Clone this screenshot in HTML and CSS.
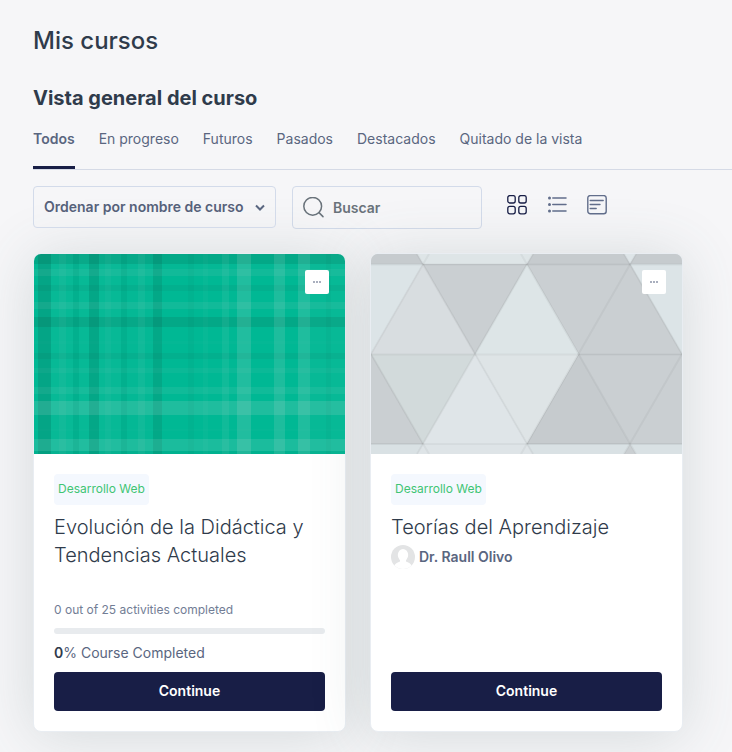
FILE: index.html
```html
<!DOCTYPE html>
<html lang="es">
<head>
<meta charset="utf-8">
<meta name="viewport" content="width=device-width, initial-scale=1">
<title>Mis cursos</title>
<link rel="stylesheet" href="styles.css">
</head>
<body>
<main class="page">
  <h1 class="page-title">Mis cursos</h1>
  <h2 class="section-title">Vista general del curso</h2>

  <nav class="tabs">
    <a class="tab tab-active" href="#todos">Todos</a>
    <a class="tab" href="#progreso">En progreso</a>
    <a class="tab" href="#futuros">Futuros</a>
    <a class="tab" href="#pasados">Pasados</a>
    <a class="tab" href="#destacados">Destacados</a>
    <a class="tab" href="#quitado">Quitado de la vista</a>
  </nav>

  <div class="controls">
    <div class="sort">
      <select class="sort-select" aria-label="Ordenar cursos">
        <option>Ordenar por nombre de curso</option>
      </select>
      <svg class="sort-arrow" width="10" height="8" viewBox="0 0 10 8" fill="none" stroke="currentColor" stroke-width="2"><path d="M1 1.5 5 5.5 9 1.5"/></svg>
    </div>
    <label class="search">
      <svg class="search-icon" width="22" height="22" viewBox="0 0 22 22" fill="none" stroke="currentColor" stroke-width="1.5" stroke-linecap="round"><circle cx="9.7" cy="9.3" r="8.9"/><path d="M16 15.6 20 19.6"/></svg>
      <input class="search-input" type="text" placeholder="Buscar" aria-label="Buscar">
    </label>
    <div class="views">
      <button class="view view-active" type="button" aria-label="Tarjeta">
        <svg width="20" height="20" viewBox="0 0 20 20" fill="none" stroke="currentColor" stroke-width="1.3"><rect x=".8" y=".6" width="7.4" height="7.4" rx="2"/><rect x="11.8" y=".6" width="7.4" height="7.4" rx="2"/><rect x=".8" y="11.4" width="7.4" height="7.4" rx="2"/><rect x="11.8" y="11.4" width="7.4" height="7.4" rx="2"/></svg>
      </button>
      <button class="view" type="button" aria-label="Lista">
        <svg width="20" height="20" viewBox="0 0 20 20" fill="none" stroke="currentColor" stroke-width="1.5" stroke-linecap="round"><path d="M5.8 3H19M5.8 9.5H19M5.8 16H19"/><g fill="currentColor" stroke="none"><circle cx="2.5" cy="3" r="1.5"/><circle cx="2.5" cy="9.5" r="1.5"/><circle cx="2.5" cy="16" r="1.5"/></g></svg>
      </button>
      <button class="view" type="button" aria-label="Resumen">
        <svg width="20" height="20" viewBox="0 0 20 20" fill="none" stroke="currentColor" stroke-width="1.4" stroke-linecap="round"><rect x=".8" y=".6" width="18.4" height="18.2" rx="2.5"/><path d="M3.2 5.5H16.2M3.2 9.5H13M3.2 13.5H9.2"/></svg>
      </button>
    </div>
  </div>

  <div class="cards">
    <article class="card">
      <div class="cover">
        <svg class="cover-art" viewBox="0 0 311 200" preserveAspectRatio="xMidYMid slice" aria-hidden="true">
          <rect width="311" height="200" fill="#00b894"/>
          <g fill="#222">
            <rect y="0" width="311" height="10" opacity=".1"/>
            <rect y="31" width="311" height="6" opacity=".05"/>
            <rect y="63" width="311" height="10" opacity=".1"/>
            <rect y="99" width="311" height="6" opacity=".05"/>
            <rect y="197" width="311" height="3" opacity=".04"/>
            <rect x="4" width="13" height="200" opacity=".12"/>
            <rect x="39" width="6" height="200" opacity=".05"/>
            <rect x="55" width="10" height="200" opacity=".11"/>
            <rect x="87" width="6" height="200" opacity=".05"/>
            <rect x="119" width="9" height="200" opacity=".1"/>
            <rect x="154" width="6" height="200" opacity=".03"/>
            <rect x="292" width="5" height="200" opacity=".03"/>
          </g>
          <g fill="#ddd">
            <rect y="10" width="311" height="5" opacity=".02"/>
            <rect y="15" width="311" height="7" opacity=".08"/>
            <rect y="48" width="311" height="7" opacity=".08"/>
            <rect y="87" width="311" height="3" opacity=".02"/>
            <rect y="114" width="311" height="5" opacity=".05"/>
            <rect y="133" width="311" height="7" opacity=".07"/>
            <rect y="147" width="311" height="14" opacity=".14"/>
            <rect y="175" width="311" height="2" opacity=".02"/>
            <rect y="185" width="311" height="12" opacity=".12"/>
            <rect x="17" width="22" height="200" opacity=".03"/>
            <rect x="25" width="7" height="200" opacity=".05"/>
            <rect x="45" width="10" height="200" opacity=".03"/>
            <rect x="65" width="22" height="200" opacity=".03"/>
            <rect x="71" width="6" height="200" opacity=".04"/>
            <rect x="93" width="26" height="200" opacity=".02"/>
            <rect x="104" width="7" height="200" opacity=".06"/>
            <rect x="169" width="5" height="200" opacity=".03"/>
            <rect x="188" width="7" height="200" opacity=".07"/>
            <rect x="203" width="14" height="200" opacity=".15"/>
            <rect x="240" width="11" height="200" opacity=".13"/>
            <rect x="264" width="12" height="200" opacity=".14"/>
            <rect x="276" width="35" height="200" opacity=".03"/>
          </g>
        </svg>
        <button class="menu" type="button" aria-label="Acciones"><span class="dot"></span><span class="dot"></span><span class="dot"></span></button>
      </div>
      <div class="card-body">
        <span class="badge">Desarrollo Web</span>
        <h3 class="course-name">Evolución de la Didáctica y Tendencias Actuales</h3>
        <div class="card-foot">
          <p class="activities">0 out of 25 activities completed</p>
          <div class="bar"></div>
          <p class="percent"><strong class="percent-value">0</strong>% Course Completed</p>
          <a class="continue" href="#curso-1">Continue</a>
        </div>
      </div>
    </article>

    <article class="card">
      <div class="cover">
        <svg class="cover-art" viewBox="0 0 311 200" preserveAspectRatio="xMidYMid slice" aria-hidden="true">
          <rect width="311" height="200" fill="#cacfd2"/>
          <path d="M46 0H162L156 10H52Z" fill="#dee5e7"/>
          <path d="M253 0H265L259 10Z" fill="#dee5e8"/>
          <path d="M0 0H46L52 10H0ZM162 0H253L259 10H156ZM265 0H311V10H259Z" fill="#c6cbce"/>
          <path d="M0 10H52L0 100Z" fill="#dce4e7"/>
          <path d="M52 10 104 100H0Z" fill="#d8dde0"/>
          <path d="M156 10 208 100H104Z" fill="#dde5e7"/>
          <path d="M259 10H311V100Z" fill="#dce4e7"/>
          <path d="M0 100H104L52 190Z" fill="#d2dadb"/>
          <path d="M104 100 156 190H52Z" fill="#dfe5e8"/>
          <path d="M104 100H208L156 190Z" fill="#dee4e6"/>
          <path d="M208 100 259 190H156Z" fill="#c6cbce"/>
          <path d="M0 190H52L46 200H0ZM156 190H259L253 200H162ZM259 190H311V200H265Z" fill="#d9e1e4"/>
          <path d="M52 190H156L162 200H46Z" fill="#dee4e7"/>
          <g fill="none" stroke="#333" stroke-width="2" stroke-opacity=".05">
            <path d="M0 10.500H311M0 100.500H311M0 190H311"/>
            <path d="M46 0 162 200M150 0 265 200M253 0 311 100M0 100 58 200"/>
            <path d="M58 0 0 100M162 0 46 200M265 0 150 200M311 100 253 200"/>
          </g>
          <g fill="none" stroke="#333" stroke-width="1" stroke-opacity=".04">
            <path d="M0 10.500H311M208 100.500H311M0 190H52M156 190H311M52 10 104 100 156 10 208 100 156 190M0 100 52 190M259 10 311 100"/>
          </g>
        </svg>
        <button class="menu" type="button" aria-label="Acciones"><span class="dot"></span><span class="dot"></span><span class="dot"></span></button>
      </div>
      <div class="card-body">
        <span class="badge">Desarrollo Web</span>
        <h3 class="course-name">Teorías del Aprendizaje</h3>
        <div class="teacher">
          <svg width="24" height="24" viewBox="0 0 24 24" aria-hidden="true"><defs><clipPath id="avatar"><circle cx="12" cy="12" r="12"/></clipPath></defs><g clip-path="url(#avatar)"><rect width="24" height="24" fill="#e3e4e5"/><ellipse cx="12" cy="10" rx="5.2" ry="6" fill="#fff"/><path d="M2 24C3 19 6 17.5 9 16.5V14H15V16.5C18 17.5 21 19 22 24Z" fill="#fff"/></g></svg>
          <span>Dr. Raull Olivo</span>
        </div>
        <div class="card-foot">
          <a class="continue" href="#curso-2">Continue</a>
        </div>
      </div>
    </article>
  </div>
</main>
</body>
</html>
```
FILE: styles.css
```css
* {
  box-sizing: border-box;
}

body {
  margin: 0;
  background: #f6f6f8;
  color: #5a6680;
  font-family: Inter, "Liberation Sans", sans-serif;
  font-size: 14px;
  line-height: 22px;
}

h1, h2, h3, p {
  margin: 0;
}

a {
  color: inherit;
  text-decoration: none;
}

.page {
  padding: 25px 0 21px 33px;
}

.page-title {
  color: #2f3b4b;
  font-size: 24px;
  font-weight: 500;
  line-height: 32px;
}

.section-title {
  margin-top: 27px;
  color: #2f3b4b;
  font-size: 20px;
  font-weight: 700;
  line-height: 28px;
}

.tabs {
  display: flex;
  gap: 24px;
  margin-top: 16px;
  border-bottom: 1px solid #d5dae6;
}

.tab {
  padding-bottom: 16px;
  border-bottom: 3px solid transparent;
}

.tab-active {
  border-color: #181e46;
  font-weight: 600;
}

.controls {
  display: flex;
  align-items: flex-start;
  gap: 16px;
  margin-top: 16px;
}

.sort {
  position: relative;
}

.sort-select {
  appearance: none;
  width: 243px;
  height: 42px;
  padding: 0 28px 0 10px;
  border: 1px solid #d3dbea;
  border-radius: 4px;
  background: transparent;
  color: #56617a;
  font: inherit;
  font-weight: 600;
}

.sort-arrow {
  position: absolute;
  top: 18px;
  right: 11px;
  pointer-events: none;
}

.search {
  display: flex;
  align-items: center;
  gap: 8px;
  width: 190px;
  height: 43px;
  padding: 0 10px;
  border: 1px solid #d3dbea;
  border-radius: 4px;
  color: #6a737b;
}

.search-icon {
  flex: none;
}

.search-input {
  flex: 1;
  min-width: 0;
  padding: 0;
  border: 0;
  outline: 0;
  background: transparent;
  color: inherit;
  font: inherit;
  font-weight: 600;
}

.search-input::placeholder {
  color: #6a737b;
  opacity: 1;
}

.views {
  display: flex;
  gap: 20px;
  padding: 9px 0 0 9px;
}

.view {
  display: flex;
  padding: 0;
  border: 0;
  background: transparent;
  color: #626e8b;
}

.view-active {
  color: #181e46;
}

.cards {
  display: grid;
  grid-template-columns: 1fr 1fr;
  gap: 24px;
  margin-top: 24px;
  padding-right: 49px;
}

.card {
  display: flex;
  flex-direction: column;
  min-height: 479px;
  overflow: hidden;
  border: 1px solid #e9edf2;
  border-radius: 8px;
  background: #fff;
  box-shadow: 0 4px 60px rgba(75, 100, 100, 0.19);
}

.cover {
  position: relative;
  height: 200px;
}

.cover-art {
  display: block;
  width: 100%;
  height: 100%;
}

.menu {
  position: absolute;
  top: 16px;
  right: 16px;
  display: flex;
  align-items: center;
  justify-content: center;
  gap: 1px;
  width: 24px;
  height: 24px;
  padding: 0;
  border: 0;
  border-radius: 2px;
  background: #fff;
}

.dot {
  width: 2px;
  height: 2px;
  background: #a9afbe;
}

.card-body {
  display: flex;
  flex: 1;
  flex-direction: column;
  align-items: flex-start;
  padding: 20px;
}

.badge {
  padding: 4px 4px 5px;
  border-radius: 4px;
  background: #f4f8fe;
  color: #3fc574;
  font-size: 12px;
}

.course-name {
  margin-top: 8px;
  color: #2f3b4b;
  font-size: 20px;
  font-weight: 300;
  line-height: 28px;
}

.teacher {
  display: flex;
  align-items: center;
  gap: 4px;
  margin-top: 4px;
  font-weight: 600;
}

.card-foot {
  align-self: stretch;
  margin-top: auto;
}

.activities {
  color: #727d95;
  font-size: 12px;
}

.bar {
  height: 6px;
  margin: 7px 0 8px;
  border-radius: 3px;
  background: #e8ebee;
}

.percent {
  margin-bottom: 8px;
}

.percent-value {
  color: #2f3b4b;
  font-weight: 600;
}

.continue {
  display: block;
  padding: 8px 0 9px;
  border-radius: 4px;
  background: #181e46;
  color: #fff;
  font-weight: 600;
  text-align: center;
}
```
